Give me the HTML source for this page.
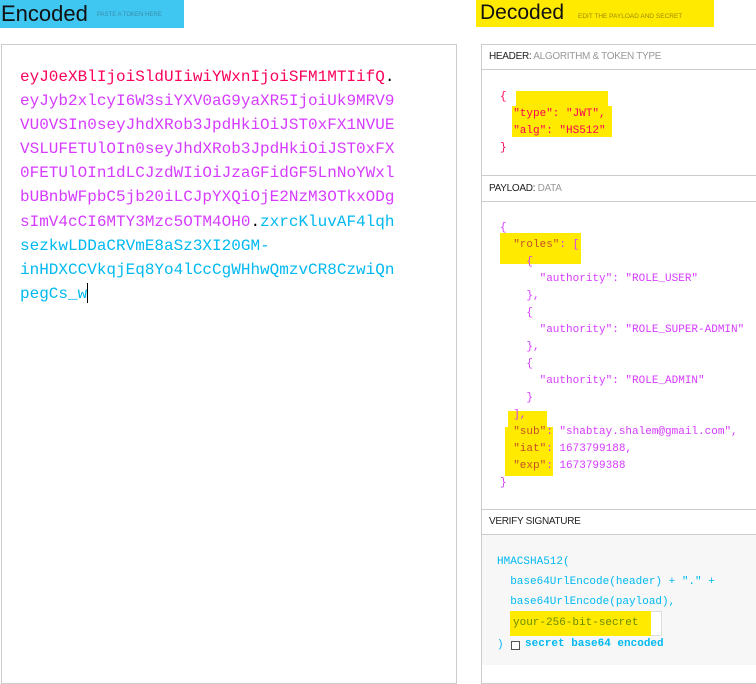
<!DOCTYPE html>
<html><head><meta charset="utf-8"><style>
*{margin:0;padding:0;box-sizing:border-box}
body{width:756px;height:661px;background:#fff;position:relative;overflow:hidden;font-family:"Liberation Sans",sans-serif}
.a{position:absolute}
.mono{font-family:"Liberation Mono",monospace}
.hl{position:absolute;background:#ffea00}
.j{position:absolute;font-family:"Liberation Mono",monospace;font-size:11px;line-height:17px;white-space:pre;color:#d63aff}
.lab{position:absolute;font-size:10px;color:#222;letter-spacing:-0.3px}
.lab span{color:#999}
</style></head><body>
<div class="a" style="left:0;top:0;width:184px;height:28px;background:#3fc6f1"></div>
<div class="a" style="left:1px;top:1px;font-size:22px;color:#111">Encoded</div>
<div class="a" style="left:97px;top:12px;font-size:6px;color:#3a8ea8">PASTE A TOKEN HERE</div>
<div class="a" style="left:1px;top:44px;width:456px;height:640px;border:1px solid #ccc"></div>
<div class="a mono" style="left:20px;top:65px;font-size:16px;line-height:24.1px;white-space:pre;color:#d63aff"><span style="color:#fb015b">eyJ0eXBlIjoiSldUIiwiYWxnIjoiSFM1MTIifQ</span><span style="color:#000">.</span>
eyJyb2xlcyI6W3siYXV0aG9yaXR5IjoiUk9MRV9
VU0VSIn0seyJhdXRob3JpdHkiOiJST0xFX1NVUE
VSLUFETUlOIn0seyJhdXRob3JpdHkiOiJST0xFX
0FETUlOIn1dLCJzdWIiOiJzaGFidGF5LnNoYWxl
bUBnbWFpbC5jb20iLCJpYXQiOjE2NzM3OTkxODg
sImV4cCI6MTY3Mzc5OTM4OH0<span style="color:#000">.</span><span style="color:#00b9f1">zxrcKluvAF4lqh</span>
<span style="color:#00b9f1">sezkwLDDaCRVmE8aSz3XI20GM-</span>
<span style="color:#00b9f1">inHDXCCVkqjEq8Yo4lCcCgWHhwQmzvCR8CzwiQn</span>
<span style="color:#00b9f1">pegCs_w</span></div>
<div class="a" style="left:87px;top:283px;width:1px;height:20px;background:#000"></div>

<div class="a" style="left:476px;top:0;width:238px;height:27px;background:#ffea00"></div>
<div class="a" style="left:480px;top:1px;font-size:21px;color:#111">Decoded</div>
<div class="a" style="left:578px;top:13px;font-size:6.5px;color:#9a8a00">EDIT THE PAYLOAD AND SECRET</div>
<div class="a" style="left:481px;top:44px;width:290px;height:640px;border:1px solid #ccc"></div>
<div class="a" style="left:482px;top:69px;width:290px;height:1px;background:#ccc"></div>
<div class="a" style="left:482px;top:175px;width:290px;height:1px;background:#ccc"></div>
<div class="a" style="left:482px;top:201px;width:290px;height:1px;background:#ccc"></div>
<div class="a" style="left:482px;top:509px;width:290px;height:1px;background:#ccc"></div>
<div class="a" style="left:482px;top:534px;width:290px;height:1px;background:#ccc"></div>
<div class="a" style="left:482px;top:535px;width:290px;height:130px;background:#f7f7f7"></div>
<div class="lab" style="left:489px;top:51px">HEADER: <span>ALGORITHM &amp; TOKEN TYPE</span></div>
<div class="lab" style="left:489px;top:183px">PAYLOAD: <span>DATA</span></div>
<div class="lab" style="left:489px;top:516px">VERIFY SIGNATURE</div>

<div class="hl" style="left:516px;top:91px;width:92px;height:15px"></div>
<div class="hl" style="left:512px;top:106px;width:100px;height:31px"></div>
<div class="j" style="left:500px;top:89px;color:#fb015b">{
  "type": "JWT",
  "alg": "HS512"
}</div>

<div class="hl" style="left:500px;top:233px;width:81px;height:31px"></div>
<div class="hl" style="left:508px;top:411px;width:39px;height:17px"></div>
<div class="hl" style="left:505px;top:427px;width:48px;height:49px"></div>
<div class="j" style="left:500px;top:220px">{
  <span style="color:#c8502a">"roles"</span>: [
    {
      "authority": "ROLE_USER"
    },
    {
      "authority": "ROLE_SUPER-ADMIN"
    },
    {
      "authority": "ROLE_ADMIN"
    }
  ],
  <span style="color:#c8502a">"sub"</span>: "shabtay.shalem@gmail.com",
  <span style="color:#c8502a">"iat"</span>: 1673799188,
  <span style="color:#c8502a">"exp"</span>: 1673799388
}</div>

<div class="j" style="left:497px;top:552px;line-height:20px;color:#00b9f1">HMACSHA512(
  base64UrlEncode(header) + "." +
  base64UrlEncode(payload),</div>
<div class="a" style="left:510px;top:611px;width:152px;height:25px;background:#fff;border:1px solid #ddd"></div>
<div class="hl" style="left:510px;top:611px;width:141px;height:25px"></div>
<div class="j" style="left:513px;top:615px;color:#6a8a00">your-256-bit-secret</div>
<div class="j" style="left:497px;top:637px;color:#00b9f1">)</div>
<div class="a" style="left:511px;top:641px;width:9px;height:9px;border:1px solid #555;background:#fff"></div>
<div class="a mono" style="left:525px;top:638px;font-size:11px;font-weight:bold;color:#00b9f1">secret base64 encoded</div>
</body></html>
